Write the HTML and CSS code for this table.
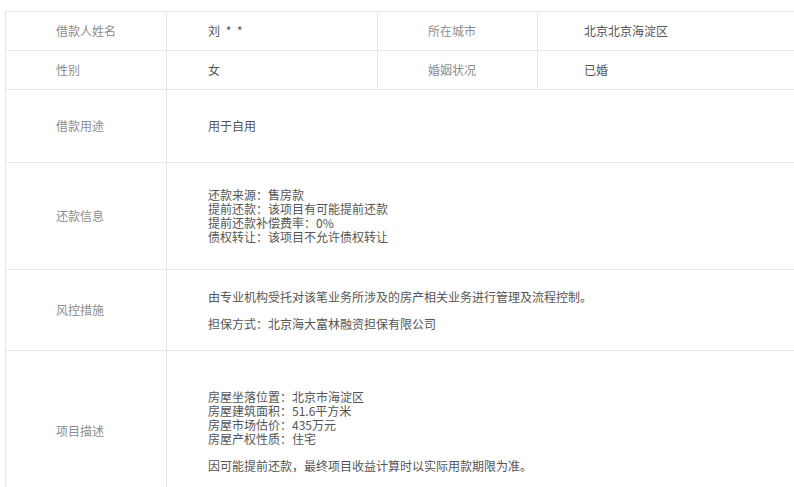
FILE: index.html
```html
<!DOCTYPE html>
<html lang="zh-CN">
<head>
    <meta charset="UTF-8">
    <meta name="viewport" content="width=device-width, initial-scale=1.0">
    <title>借款人信息</title>
    <link rel="stylesheet" href="styles.css">
</head>
<body>
    <table class="info-table">
        <colgroup>
            <col class="col-label">
            <col class="col-value">
            <col class="col-label2">
            <col class="col-value2">
        </colgroup>
        <tr class="row-short">
            <td class="label">借款人姓名</td>
            <td class="value"><span class="masked">刘 * *</span></td>
            <td class="label">所在城市</td>
            <td class="value value-right">北京北京海淀区</td>
        </tr>
        <tr class="row-short">
            <td class="label">性别</td>
            <td class="value">女</td>
            <td class="label">婚姻状况</td>
            <td class="value value-right">已婚</td>
        </tr>
        <tr class="row-use">
            <td class="label">借款用途</td>
            <td class="value" colspan="3">用于自用</td>
        </tr>
        <tr class="row-repay">
            <td class="label">还款信息</td>
            <td class="value" colspan="3">
                还款来源：售房款<br>
                提前还款：该项目有可能提前还款<br>
                提前还款补偿费率：0%<br>
                债权转让：该项目不允许债权转让
            </td>
        </tr>
        <tr class="row-risk">
            <td class="label">风控措施</td>
            <td class="value" colspan="3">
                <p>由专业机构受托对该笔业务所涉及的房产相关业务进行管理及流程控制。</p>
                <p>担保方式：北京海大富林融资担保有限公司</p>
            </td>
        </tr>
        <tr class="row-desc">
            <td class="label">项目描述</td>
            <td class="value" colspan="3">
                <p>房屋坐落位置：北京市海淀区<br>
                房屋建筑面积：51.6平方米<br>
                房屋市场估价：435万元<br>
                房屋产权性质：住宅</p>
                <p>因可能提前还款，最终项目收益计算时以实际用款期限为准。</p>
            </td>
        </tr>
    </table>
</body>
</html>
```

FILE: styles.css
```css
body {
    margin: 0;
    padding: 0;
    background: #fff;
    font-family: "Noto Sans CJK SC", "Liberation Sans", sans-serif;
    font-size: 12px;
    overflow-x: hidden;
}

.info-table {
    margin: 11px 0 0 5px;
    width: 960px;
    table-layout: fixed;
    border-collapse: collapse;
}

.col-label {
    width: 161px;
}

.col-value {
    width: 211px;
}

.col-label2 {
    width: 160px;
}

.info-table td {
    border: 1px solid #e6e6e6;
    vertical-align: middle;
    line-height: 14px;
    padding: 0;
}

.label {
    color: #8c8c8c;
    padding-left: 50px !important;
}

.value {
    color: #555;
    padding-left: 41px !important;
}

.value-right {
    padding-left: 46px !important;
}

.masked {
    word-spacing: 3px;
}

.value p {
    margin: 0;
}

.value p + p {
    margin-top: 13px;
}

.row-short td {
    height: 38px;
}

.row-use td {
    height: 72px;
}

.row-repay td {
    height: 106px;
}

.row-risk td {
    height: 80px;
}

.row-desc td {
    height: 160px;
}
```
